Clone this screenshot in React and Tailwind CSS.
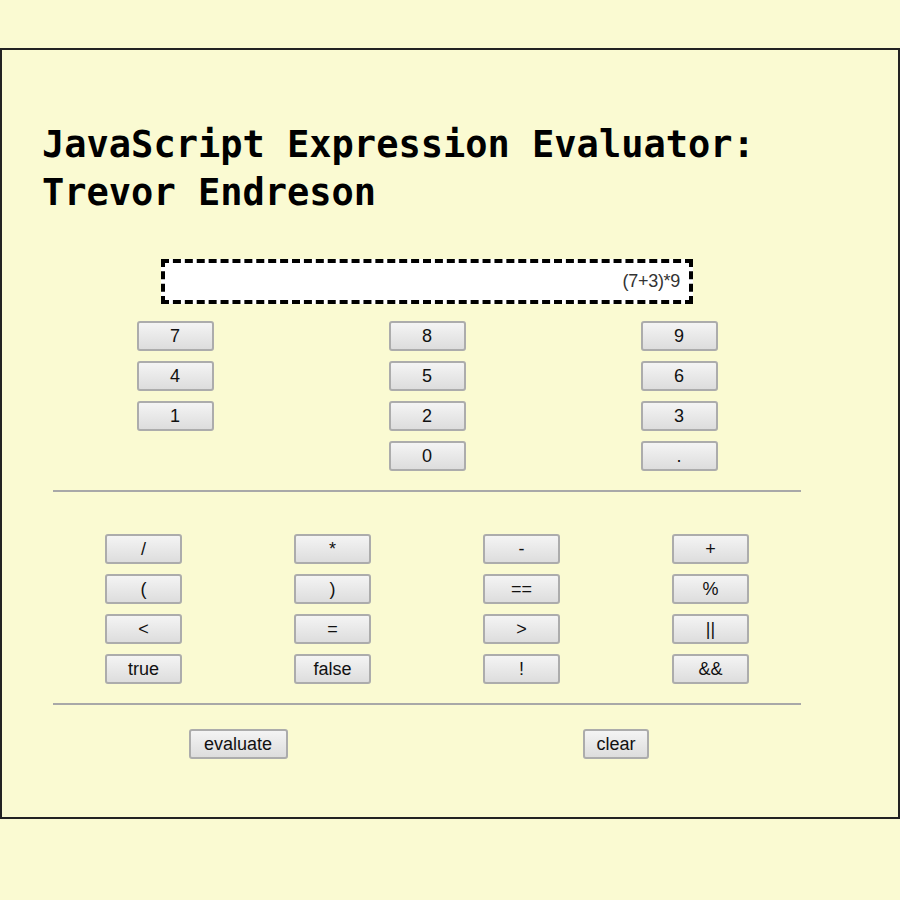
// App.jsx - JavaScript expression evaluator page

import React, { useState } from 'react';

const numberRows = [
    ['7', '8', '9'],
    ['4', '5', '6'],
    ['1', '2', '3'],
    [null, '0', '.'],
];

const operatorRows = [
    ['/', '*', '-', '+'],
    ['(', ')', '==', '%'],
    ['<', '=', '>', '||'],
    ['true', 'false', '!', '&&'],
];

function Key({ label, onClick, className = 'w-[77px]' }) {
    return (
        <button
            onClick={onClick}
            className={`h-[30px] ${className} rounded-[3px] border-2 border-[#acacac] bg-gradient-to-b from-[#f4f4f4] to-[#dddddd] text-[18px] leading-none text-[#111] font-['Liberation_Sans',Arial,sans-serif]`}
        >
            {label}
        </button>
    );
}

export default function App() {
    const [expr, setExpr] = useState('(7+3)*9');

    const append = (s) => setExpr((e) => e + s);

    const evaluate = () => {
        try {
            // eslint-disable-next-line no-new-func
            setExpr(String(Function('"use strict"; return (' + expr + ')')()));
        } catch (err) {
            setExpr('error');
        }
    };

    return (
        <div className="min-h-[900px] w-[900px] bg-[#fafad2] pt-[48px]">
            <div className="h-[771px] w-[900px] border-2 border-[#222]">
                {/* Title */}
                <h1 className="ml-[40px] mt-[71px] text-[37px] font-bold leading-[48px] text-black font-['DejaVu_Sans_Mono',monospace]">
                    JavaScript Expression Evaluator:
                    <br />
                    Trevor Endreson
                </h1>

                <div className="ml-[47px] w-[756px]">
                    {/* Display */}
                    <div className="mt-[42px] flex justify-center">
                        <div className="flex h-[45px] w-[532px] items-center justify-end border-4 border-dashed border-black bg-white pr-[9px] text-[18px] tracking-[-0.3px] text-[#333] font-['Liberation_Sans',Arial,sans-serif]">
                            {expr}
                        </div>
                    </div>

                    {/* Digits */}
                    <div className="mt-[17px] grid grid-cols-3 gap-y-[10px]">
                        {numberRows.flat().map((n, i) => (
                            <div key={i} className="flex h-[30px] justify-center">
                                {n !== null && <Key label={n} onClick={() => append(n)} />}
                            </div>
                        ))}
                    </div>

                    <hr className="mx-[4px] mt-[19px] border-t-2 border-[#a8a8a8]" />

                    {/* Operators */}
                    <div className="mt-[42px] grid grid-cols-4 gap-y-[10px]">
                        {operatorRows.flat().map((op) => (
                            <div key={op} className="flex justify-center">
                                <Key label={op} onClick={() => append(op)} />
                            </div>
                        ))}
                    </div>

                    <hr className="mx-[4px] mt-[19px] border-t-2 border-[#a8a8a8]" />

                    <div className="mt-[24px] grid grid-cols-2">
                        <div className="flex justify-center">
                            <Key label="evaluate" className="w-[99px]" onClick={evaluate} />
                        </div>
                        <div className="flex justify-center">
                            <Key label="clear" className="w-[66px]" onClick={() => setExpr('')} />
                        </div>
                    </div>
                </div>
            </div>
        </div>
    );
}
